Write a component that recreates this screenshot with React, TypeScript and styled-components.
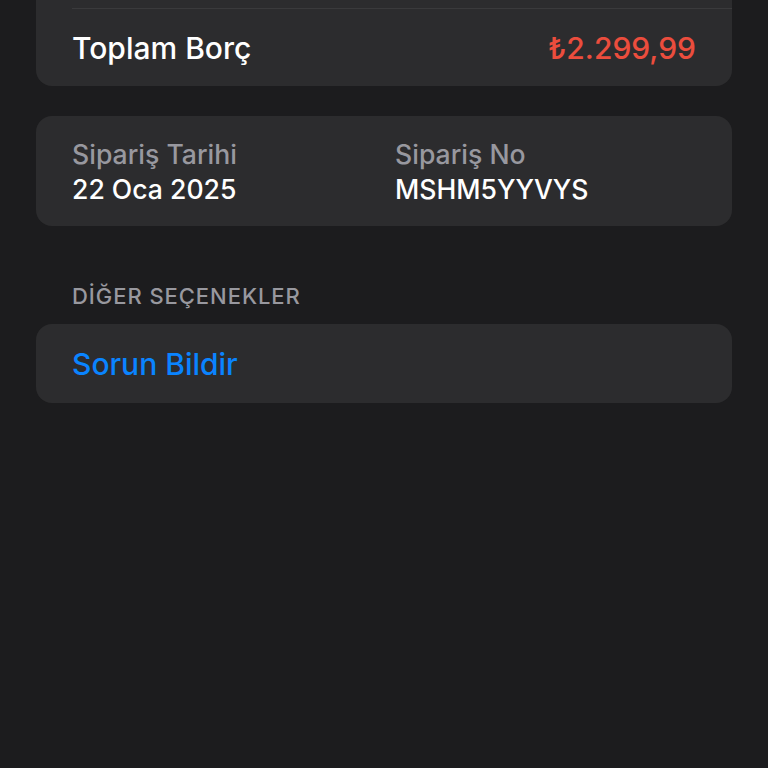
import React from "react";
import styled, { createGlobalStyle } from "styled-components";

const Global = createGlobalStyle`
  html, body { margin: 0; padding: 0; background: #1c1c1e; }
  body { font-family: Inter, "Liberation Sans", sans-serif; -webkit-font-smoothing: antialiased; }
`;

const Page = styled.div`
  width: 768px;
  height: 768px;
  overflow: hidden;
  background: #1c1c1e;
`;

const Content = styled.div`
  margin-top: -60px;
  padding: 0 36px;
  display: flex;
  flex-direction: column;
`;

const Card = styled.div<{ $mt?: number }>`
  background: #2c2c2e;
  border-radius: 16px;
  margin-top: ${(p) => p.$mt ?? 0}px;
  overflow: hidden;
`;

const Row = styled.div<{ $h: number; $divider?: boolean }>`
  height: ${(p) => p.$h}px;
  margin-left: 36px;
  padding-right: 36px;
  display: flex;
  align-items: center;
  justify-content: space-between;
  border-top: ${(p) => (p.$divider ? "1px solid #3a3a3c" : "none")};
  box-sizing: border-box;
`;

const Label = styled.span`
  color: #ffffff;
  font-size: 30px;
  font-weight: 500;
  line-height: 36px;
`;

const Amount = styled.span`
  color: #eb4d3d;
  font-size: 30px;
  font-weight: 500;
  line-height: 36px;
`;

const InfoGrid = styled.div`
  display: grid;
  grid-template-columns: 323px 1fr;
  padding: 21px 36px 0;
  height: 110px;
  box-sizing: border-box;
`;

const Field = styled.div`
  display: flex;
  flex-direction: column;
`;

const FieldLabel = styled.span`
  color: #98989f;
  font-size: 26.6px;
  font-weight: 500;
  line-height: 35px;
`;

const FieldValue = styled.span`
  color: #ffffff;
  font-size: 26.6px;
  font-weight: 500;
  line-height: 35px;
`;

const SectionHeader = styled.div`
  margin-top: 58px;
  padding-left: 36px;
  color: #98989f;
  font-size: 22px;
  font-weight: 500;
  height: 24px;
  line-height: 24px;
  letter-spacing: 0.95px;
`;

const ActionCard = styled(Card)`
  height: 79px;
  display: flex;
  align-items: center;
  padding-left: 36px;
  margin-top: 16px;
`;

const Action = styled.span`
  color: #0a84ff;
  font-size: 30px;
  font-weight: 500;
  line-height: 36px;
`;

export default function App() {
  return (
    <Page>
      <Global />
      <Content>
        <Card>
          <Row $h={68} />
          <Row $h={78} $divider>
            <Label>Toplam Borç</Label>
            <Amount>₺2.299,99</Amount>
          </Row>
        </Card>
        <Card $mt={30}>
          <InfoGrid>
            <Field>
              <FieldLabel>Sipariş Tarihi</FieldLabel>
              <FieldValue>22 Oca 2025</FieldValue>
            </Field>
            <Field>
              <FieldLabel>Sipariş No</FieldLabel>
              <FieldValue>MSHM5YYVYS</FieldValue>
            </Field>
          </InfoGrid>
        </Card>
        <SectionHeader>DİĞER SEÇENEKLER</SectionHeader>
        <ActionCard>
          <Action>Sorun Bildir</Action>
        </ActionCard>
      </Content>
    </Page>
  );
}
